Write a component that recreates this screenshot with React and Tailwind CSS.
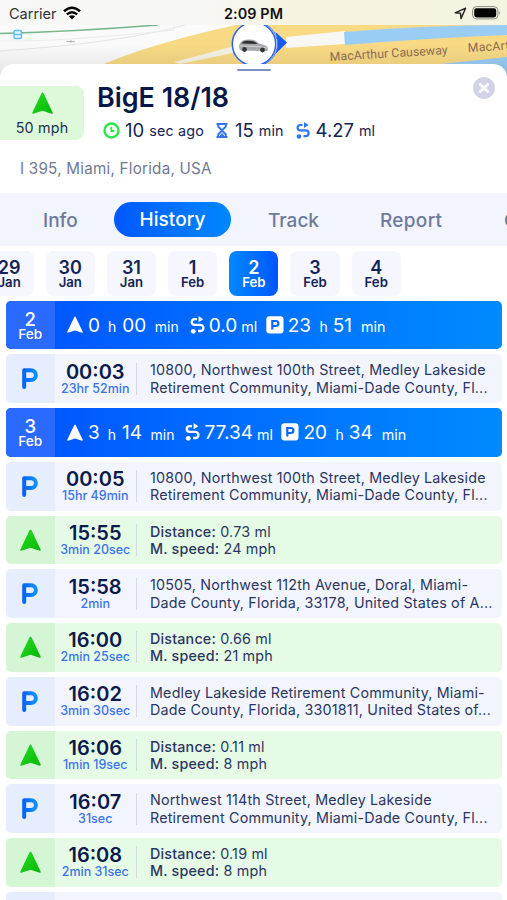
import React from 'react'

// Days in the date picker
const DAYS = [
  { day: '29', month: 'Jan' },
  { day: '30', month: 'Jan' },
  { day: '31', month: 'Jan' },
  { day: '1', month: 'Feb' },
  { day: '2', month: 'Feb', active: true },
  { day: '3', month: 'Feb' },
  { day: '4', month: 'Feb' },
]

// History feed, in the order it is displayed
const HISTORY = [
  { type: 'day', day: '2', drive: ['0', '00'], distance: '0.0', park: ['23', '51'] },
  { type: 'park', time: '00:03', duration: '23hr 52min', lines: ['10800, Northwest 100th Street, Medley Lakeside', 'Retirement Community, Miami-Dade County, Fl...'] },
  { type: 'day', day: '3', drive: ['3', '14'], distance: '77.34', park: ['20', '34'] },
  { type: 'park', time: '00:05', duration: '15hr 49min', lines: ['10800, Northwest 100th Street, Medley Lakeside', 'Retirement Community, Miami-Dade County, Fl...'] },
  { type: 'drive', time: '15:55', duration: '3min 20sec', distance: '0.73 ml', speed: '24 mph' },
  { type: 'park', time: '15:58', duration: '2min', lines: ['10505, Northwest 112th Avenue, Doral, Miami-', 'Dade County, Florida, 33178, United States of A...'] },
  { type: 'drive', time: '16:00', duration: '2min 25sec', distance: '0.66 ml', speed: '21 mph' },
  { type: 'park', time: '16:02', duration: '3min 30sec', lines: ['Medley Lakeside Retirement Community, Miami-', 'Dade County, Florida, 3301811, United States of...'] },
  { type: 'drive', time: '16:06', duration: '1min 19sec', distance: '0.11 ml', speed: '8 mph' },
  { type: 'park', time: '16:07', duration: '31sec', lines: ['Northwest 114th Street, Medley Lakeside', 'Retirement Community, Miami-Dade County, Fl...'] },
  { type: 'drive', time: '16:08', duration: '2min 31sec', distance: '0.19 ml', speed: '8 mph' },
]

function ArrowIcon({ className, fill = 'url(#greenArrow)' }) {
  return (
    <svg viewBox="0 0 20 21" className={className}>
      <path d="M9.200 1Q10 0 10.800 1L19.700 19.600Q20 21 18.800 20.700L10 18 1.200 20.700Q0 21 .3 19.600Z" fill={fill} />
    </svg>
  )
}

function RouteIcon({ className }) {
  return (
    <svg viewBox="0 0 14 17" className={className} fill="none" stroke="currentColor" strokeWidth="2.200">
      <path d="M6.500 3H4.300a2.700 2.700 0 0 0 0 5.400H9.700a2.900 2.900 0 0 1 0 5.800H7.500" />
      <path d="M8 0 12.500 3 8 6Z" fill="currentColor" stroke="none" />
      <circle cx="3" cy="14.500" r="2.300" fill="currentColor" stroke="none" />
    </svg>
  )
}

function ParkIcon() {
  return (
    <svg viewBox="0 0 16 21" className="h-[21px] w-4" fill="none">
      <path d="M2.200 19V2.200H9a4.900 4.900 0 0 1 0 9.800H4.500" stroke="url(#bluePark)" strokeWidth="4" strokeLinecap="round" strokeLinejoin="round" />
    </svg>
  )
}

function ParkBox() {
  return (
    <svg viewBox="0 0 18 18" className="h-[18px] w-[18px]" fill="none">
      <rect x=".3" y=".3" width="17.200" height="17.200" rx="3.200" fill="#fff" />
      <path d="M6.300 13.600V5h3.600a2.500 2.500 0 0 1 0 5H6.300" stroke="#0768ff" strokeWidth="2.200" />
    </svg>
  )
}

function MapView() {
  return (
    <svg viewBox="0 0 507 90" className="absolute left-0 top-0 h-[90px] w-[507px]">
      <defs>
        <linearGradient id="mapShade" x1="0" y1="0" x2="0" y2="1">
          <stop offset="0" stopColor="#000" stopOpacity="0" />
          <stop offset="1" stopColor="#000" stopOpacity=".13" />
        </linearGradient>
        <linearGradient id="statusFill" x1="0" x2="1">
          <stop offset="0" stopColor="#f7f8f7" />
          <stop offset=".4" stopColor="#f7f7f4" />
          <stop offset=".58" stopColor="#f7f3e1" />
          <stop offset="1" stopColor="#f5f3e2" />
        </linearGradient>
        <linearGradient id="greenArrow" x1="0" y1="0" x2="1" y2="1">
          <stop offset="0" stopColor="#25df20" />
          <stop offset="1" stopColor="#09b509" />
        </linearGradient>
        <linearGradient id="bluePark" x1="0" x2="1">
          <stop offset="0" stopColor="#0a63fa" />
          <stop offset="1" stopColor="#0b94fd" />
        </linearGradient>
      </defs>
      <path d="M0 0H507V90H0Z" fill="#fafafa" />
      <path d="M0 51Q120 43 185 25" stroke="#e4e5e5" fill="none" />
      <path d="M0 41Q60 42 174 30V25" stroke="#ececec" fill="none" />
      <path d="M0 33.500C60 32 120 28 158 25" stroke="#75b58b" strokeWidth="1.600" fill="none" />
      <path d="M104 64Q150 44 236 25H507V60L253 90H104Z" fill="#f8da85" />
      <path d="M174 62 242 44V51L180 64Z" fill="#f6f2e4" />
      <path d="M286 37 345 31V44L286 48Z" fill="#f8f7f4" />
      <path d="M344 32Q430 25 507 25V35Q430 38 345 45Z" fill="#9acdf4" />
      <path d="M440 64Q480 60 507 57V90H440Z" fill="#9acdf4" />
      <path d="M66 41.500h9M71 40v3" stroke="#b5b8ba" />
      <path d="M0 44H507V90H0Z" fill="url(#mapShade)" />
      <g fill="none" stroke="#5cbcf4" strokeWidth="1.400">
        <rect x="14" y="30.500" width="7.500" height="8" rx="1.500" fill="#e2f4fe" />
        <path d="M14 34.500h7" />
      </g>
      <g fill="#8b6b51" fontSize="12.200" fontFamily="Roboto, sans-serif">
        <text transform="rotate(-3.400 330 61)" x="330" y="61" textLength="118">MacArthur Causeway</text>
        <text transform="rotate(-3.400 468 52)" x="468" y="52" letterSpacing=".3">MacArthur</text>
      </g>
      {/* vehicle marker */}
      <path d="M275.500 32 287 42.500 275.500 54Q279 43 275.500 32Z" fill="#145cf5" />
      <circle cx="255.500" cy="44" r="22" fill="#fff" stroke="#4377ec" strokeWidth="1" />
      <circle cx="254" cy="44" r="21.700" fill="#fff" stroke="#2b63ea" strokeWidth="1.500" />
      <path d="M239.500 49Q238.500 45.500 240.500 42.500 242 40 246 39.700 253 39.200 256 41L260 44Q266.500 45 267.800 47.500L267.500 51 240.500 50.500Z" fill="#a6a7ab" />
      <path d="M241.500 43.500Q243 41 246 40.800 252.500 40.400 255 42L257.500 44Z" fill="#303136" />
      <path d="M240 46 258 46.500 267 48" stroke="#d2d3d6" strokeWidth="1" fill="none" />
      <circle cx="244.500" cy="49.500" r="2.400" fill="#333439" />
      <circle cx="262.500" cy="50" r="2.400" fill="#333439" />
      <path d="M0 0H507V25H0Z" fill="url(#statusFill)" />
    </svg>
  )
}

function StatusBar() {
  return (
    <div className="relative flex h-16 items-start justify-between pl-[9px] pr-[6px] pt-1">
      <div className="flex w-[100px] items-center gap-[6px] text-[14.500px] leading-5 text-[#303030]">
        Carrier
        <svg viewBox="0 0 18 14" className="-mt-[2px] h-[14px] w-[18px]">
          <g fill="none" stroke="#050505" strokeWidth="2.500">
            <path d="M1 5.200Q9-1.800 17 5.200" />
            <path d="M3.900 8.400Q9 4 14.100 8.400" />
          </g>
          <path d="M9 13.500 5.900 10.300Q9 8 12.100 10.300Z" fill="#050505" />
        </svg>
      </div>
      <div className="-ml-[3px] text-[14.400px] font-semibold leading-5 tracking-[.1px] text-[#111]">2:09 PM</div>
      <div className="flex w-[100px] items-center justify-end gap-[5px] pt-[2px]">
        <svg viewBox="0 0 13 13" className="h-[13px] w-[13px]">
          <path d="M1.200 5.800 11.600 1.200 7 11.600 6.500 6.300Z" fill="none" stroke="#222" strokeWidth="1.400" strokeLinejoin="round" />
        </svg>
        <svg viewBox="0 0 29 14" className="h-[14px] w-[29px]">
          <rect x=".6" y=".6" width="25.300" height="12.300" rx="3.800" fill="none" stroke="#8a8a83" />
          <rect x="2.200" y="2.200" width="22" height="9.200" rx="2.300" fill="#050505" />
          <path d="M27.200 4.800Q29 6.800 27.200 8.800Z" fill="#8a8a83" />
        </svg>
      </div>
    </div>
  )
}

function VehicleHeader() {
  return (
    <div className="relative h-[129px] rounded-t-[14px] bg-white">
      <div className="flex justify-center pt-[5px]">
        <div className="h-[2px] w-[34px] rounded bg-[#7f8fc0]"></div>
      </div>
      <div className="flex pt-[15px]">
        <div className="flex h-[54px] w-[84px] flex-col items-center rounded-r-[8px] bg-[#ddf9da] pt-[6px]">
          <ArrowIcon className="h-[22px] w-[21px]" />
          <div className="mt-[5px] text-[14.300px] leading-[18px] tracking-[.2px] text-[#202f51]">50 mph</div>
        </div>
        <div className="ml-[13px] -mt-[5px]">
          <h1 className="text-[26.900px] font-semibold leading-8 text-[#06184a]">BigE 18/18</h1>
          <div className="mt-[5px] flex h-[24px] items-center pl-[6px] leading-[22px] text-[#142451]">
            <svg viewBox="0 0 17 17" className="h-[17px] w-[17px]" fill="none" stroke="#2fe54b" strokeWidth="2.400">
              <circle cx="8.500" cy="8.500" r="7" />
              <path d="M8.300 4.800V9H11.500" strokeWidth="1.800" />
            </svg>
            <span className="ml-[5px] text-[18.500px]">10</span>
            <span className="ml-[5px] mt-[2px] text-[14.300px] tracking-[.2px]">sec ago</span>
            <svg viewBox="0 0 12 15" className="ml-[12px] h-[15px] w-3" fill="none" stroke="#3274f1" strokeWidth="1.900">
              <path d="M.5 1H11.500M.5 14H11.500M2.200 1V3.500L9.800 11.500V14M9.800 1V3.500L2.200 11.500V14" />
              <path d="M4 13 6 10.500 8 13Z" fill="#3274f1" strokeWidth="1" />
            </svg>
            <span className="ml-[7px] text-[18.500px]">15</span>
            <span className="ml-[5px] mt-[2px] text-[14.300px] tracking-[.1px]">min</span>
            <RouteIcon className="ml-[12px] h-[17px] w-[14px] text-[#3274f1]" />
            <span className="ml-[6px] text-[18.500px]">4.27</span>
            <span className="ml-[5px] mt-[2px] text-[14.300px]">ml</span>
          </div>
        </div>
      </div>
      <div className="mt-[17px] pl-[20px] text-[15.200px] leading-5 tracking-[.240px] text-[#717894]">I 395, Miami, Florida, USA</div>
      <svg viewBox="0 0 22 22" className="absolute right-[12px] top-[13px] h-[22px] w-[22px]">
        <circle cx="11" cy="11" r="11" fill="#d0d4e6" />
        <path d="M7.300 7.300 14.700 14.700M14.700 7.300 7.300 14.700" stroke="#fff" strokeWidth="2.600" strokeLinecap="round" />
      </svg>
    </div>
  )
}

function Tabs() {
  return (
    <div className="flex h-[53px] items-center overflow-hidden whitespace-nowrap bg-[#f2f4fe] text-[19px] font-medium text-[#6c7a9b]">
      <div className="w-[114px] shrink-0 pl-[43px] pt-[3px]">Info</div>
      <div className="flex h-[35px] w-[117px] shrink-0 items-center justify-center rounded-full bg-linear-to-r from-[#0057ff] to-[#0087ff] pt-[2px] tracking-[.1px] text-white">History</div>
      <div className="w-[149px] shrink-0 pl-[37px] pt-[3px]">Track</div>
      <div className="w-[124px] shrink-0 pt-[3px] tracking-[.3px]">Report</div>
      <div className="shrink-0 pt-[3px]">Geo</div>
    </div>
  )
}

function DayPicker() {
  return (
    <div className="-ml-[15.500px] flex w-[540px] gap-3 pt-[5px]">
      {DAYS.map((item) => (
        <div
          key={item.day}
          className={`flex h-[44.500px] w-[49.200px] flex-col items-center rounded-[8px] pt-[7px] font-semibold ${
            item.active ? 'bg-linear-to-r from-[#0087ff] to-[#0055ff] text-white' : 'bg-[#f5f6fe] text-[#152454]'
          }`}
        >
          <div className="text-[18px] leading-[19px]">{item.day}</div>
          <div className="text-[13.200px] leading-[10px]">{item.month}</div>
        </div>
      ))}
    </div>
  )
}

function DayRow({ item }) {
  return (
    <div className="flex h-[48.750px] overflow-hidden rounded-[5px] bg-linear-to-r from-[#0051ff] to-[#008aff] text-white">
      <div className="flex w-[48.500px] flex-col items-center bg-[#2b6aff] pt-[9px] font-medium">
        <div className="text-[18.500px] leading-[19px]">{item.day}</div>
        <div className="text-[13.700px] leading-[10px]">Feb</div>
      </div>
      <div className="flex items-center pl-[12.500px] pt-[2px] text-[19px] leading-6">
        <ArrowIcon className="-mt-[2px] h-[17px] w-[16px]" fill="#fff" />
        <span className="ml-[5px]">{item.drive[0]}</span>
        <span className="ml-[8px] mt-[3px] text-[14px]">h</span>
        <span className="ml-[6px]">{item.drive[1]}</span>
        <span className="ml-[8.500px] mt-[3px] text-[14px]">min</span>
        <RouteIcon className="-mt-[2px] ml-[11px] h-[18px] w-[15px]" />
        <span className="ml-[4px]">{item.distance}</span>
        <span className="ml-[4px] mt-[3px] text-[14.300px]">ml</span>
        <span className="-mt-[2px] ml-[8.500px]"><ParkBox /></span>
        <span className="ml-[4px]">{item.park[0]}</span>
        <span className="ml-[8.500px] mt-[3px] text-[14px]">h</span>
        <span className="ml-[5px]">{item.park[1]}</span>
        <span className="ml-[9px] mt-[3px] text-[14.300px]">min</span>
      </div>
    </div>
  )
}

function EventRow({ item }) {
  const drive = item.type === 'drive'
  return (
    <div className={`flex h-[48.750px] shrink-0 items-center overflow-hidden rounded-[5px] ${drive ? 'bg-[#e6fbe6]' : 'bg-[#f2f5fe]'}`}>
      <div className={`flex h-full w-[48.500px] items-center justify-center ${drive ? 'bg-[#d5f6d4]' : 'bg-[#e6edfc]'}`}>
        {drive ? <ArrowIcon className="h-[22px] w-[21px]" /> : <ParkIcon />}
      </div>
      <div className="flex h-8 w-[82.500px] flex-col items-center border-r border-[#d3d9e7] text-center">
        <div className="-mt-px text-[20px] font-semibold leading-5 text-[#0c1a4b]">{item.time}</div>
        <div className="whitespace-nowrap text-[12.500px] font-medium leading-[13px] text-[#3b74e8]">{item.duration}</div>
      </div>
      <div className="whitespace-nowrap pl-[13px] text-[14.300px] leading-[17.300px] tracking-[.190px] text-[#2a365f]">
        {drive ? (
          <>
            <div><span className="font-medium">Distance:</span> {item.distance}</div>
            <div><span className="font-medium">M. speed:</span> {item.speed}</div>
          </>
        ) : (
          item.lines.map((line, i) => <div key={i}>{line}</div>)
        )}
      </div>
    </div>
  )
}

export default function App() {
  return (
    <div className="relative h-[900px] w-[507px] overflow-hidden bg-white font-['Inter',sans-serif]">
      <MapView />
      <StatusBar />
      <VehicleHeader />
      <Tabs />
      <DayPicker />
      <div className="flex flex-col gap-[5px] pl-[6px] pr-[5px] pt-[5px]">
        {HISTORY.map((item, i) =>
          item.type === 'day' ? <DayRow key={i} item={item} /> : <EventRow key={i} item={item} />
        )}
        {/* next row, still below the fold */}
        <div className="h-[48.750px] overflow-hidden rounded-[5px] bg-[#f2f5fe]">
          <div className="h-full w-[48.500px] bg-[#e6edfc]"></div>
        </div>
      </div>
    </div>
  )
}
